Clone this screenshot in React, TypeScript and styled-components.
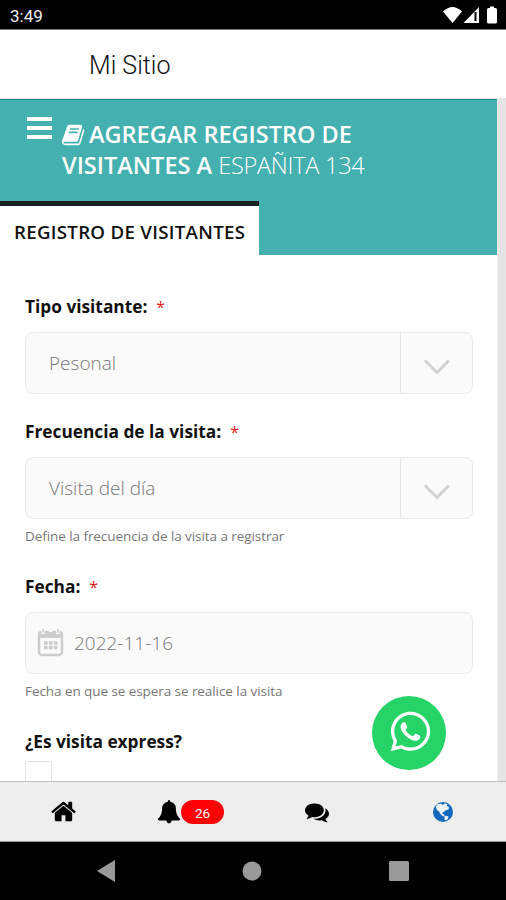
import React from 'react';
import styled, { createGlobalStyle } from 'styled-components';
import { FaWhatsapp } from 'react-icons/fa';

const GlobalStyle = createGlobalStyle`
  * { box-sizing: border-box; }
  body { margin: 0; background: #000; font-family: 'Open Sans', 'Noto Sans', sans-serif; }
`;

const Phone = styled.div`
  position: relative;
  display: flex;
  flex-direction: column;
  width: 506px;
  height: 900px;
  overflow: hidden;
  background: #fff;
`;

const StatusBar = styled.div`
  display: flex;
  justify-content: space-between;
  flex: none;
  height: 30px;
  padding: 0 7px 0 10px;
  background: #000;
  border-bottom: 1px solid #777;
  color: #eee;
  font: 400 17px/32px Roboto, sans-serif;
`;

const TitleBar = styled.header`
  flex: none;
  height: 69px;
  padding-left: 89px;
  border-bottom: 1px solid #e2e2e2;
  color: #111;
  font: 300 25px/72px Roboto, sans-serif;
`;

const Viewport = styled.main`
  display: flex;
  flex: none;
  height: 682px;
  overflow: hidden;
`;

const Page = styled.div`
  width: 497px;
  flex: none;
`;

const Gutter = styled.div`
  flex: 1;
  background: #e4e4e4;
  border-left: 1px solid #eee;
`;

const Banner = styled.section`
  display: flex;
  flex-direction: column;
  justify-content: space-between;
  height: 156px;
  background: #45b0b0;
  border-top: 1px solid #1a9390;
`;

const BannerTop = styled.div`
  display: flex;
  padding: 17px 0 0 27px;
`;

const Burger = styled.div`
  display: flex;
  flex-direction: column;
  gap: 5px;
  width: 25px;
  margin-right: 10px;
`;

const BurgerLine = styled.i`
  height: 4px;
  background: #fff;
`;

const Heading = styled.h1`
  margin: 2px 0 0;
  color: #fff;
  font-size: 23.5px;
  line-height: 31px;
  font-weight: 600;
  white-space: nowrap;
`;

const HeadingLine = styled.div`
  display: flex;
  align-items: center;
  height: 31px;
  white-space: pre;
`;

const BookSlot = styled.span`
  display: flex;
  width: 27px;
  padding-top: 1px;
`;

const LightText = styled.span`
  font-weight: 300;
  letter-spacing: -0.25px;
`;

const Tab = styled.div`
  width: 259px;
  height: 54px;
  padding-left: 14px;
  background: #fff;
  border-top: 5px solid #192020;
  color: #111;
  font-size: 18.7px;
  font-weight: 600;
  line-height: 51px;
  letter-spacing: 0.28px;
  white-space: nowrap;
`;

const Form = styled.form`
  padding: 37px 24px 0 25px;
`;

const Field = styled.div<{ $height: number }>`
  height: ${(p) => p.$height}px;
`;

const Label = styled.label`
  display: block;
  height: 40px;
  color: #111;
  font-size: 17.3px;
  font-weight: 700;
  line-height: 30px;
  white-space: nowrap;
`;

const Star = styled.span`
  margin-left: 9px;
  color: #e02020;
  font-size: 16px;
  font-weight: 500;
`;

const Control = styled.div<{ $inset: number }>`
  display: flex;
  align-items: center;
  height: 62px;
  padding-left: ${(p) => p.$inset}px;
  background: #fafafa;
  border: 1.5px solid #ebebeb;
  border-radius: 8px;
  color: #777;
  font-size: 19px;
  font-weight: 300;
`;

const ArrowCell = styled.div`
  display: flex;
  align-items: center;
  justify-content: center;
  width: 72px;
  height: 100%;
  padding-top: 7px;
  margin-left: auto;
  border-left: 1px solid #e6e6e6;
`;

const ControlText = styled.span`
  padding-bottom: 1px;
`;

const DateText = styled(ControlText)`
  margin-left: 10px;
`;

const Hint = styled.div`
  margin-top: 8px;
  color: #777;
  font-size: 13.5px;
  line-height: 19px;
  letter-spacing: -0.07px;
`;

const Checkbox = styled.div`
  width: 27px;
  height: 27px;
  margin-top: -6px;
  border: 1.5px solid #e4e4e4;
  border-radius: 2px;
`;

const WhatsappButton = styled.button`
  position: absolute;
  left: 372px;
  top: 695.5px;
  display: flex;
  align-items: center;
  justify-content: center;
  width: 74px;
  height: 74px;
  padding: 0 0 3px 3px;
  border: 0;
  border-radius: 50%;
  background: #25d366;
  color: #fff;
`;

const TabBar = styled.nav`
  display: grid;
  grid-template-columns: 127px 127px 126px 126px;
  flex: none;
  height: 61px;
  background: #ededed;
  border-top: 1px solid #bdbdbd;
  border-bottom: 1px solid #999;
`;

const TabItem = styled.div`
  display: flex;
  align-items: center;
  justify-content: center;
`;

const Badge = styled.span`
  width: 43px;
  height: 24px;
  border-radius: 12px;
  background: #fb0304;
  color: #fff;
  font: 400 13.5px/26px Roboto, sans-serif;
  text-align: center;
`;

const SystemBar = styled.footer`
  display: flex;
  align-items: center;
  flex: 1;
  padding-left: 97px;
  background: #000;
`;

const NavShapes = styled.div`
  display: flex;
  align-items: center;
  justify-content: space-between;
  width: 312px;
`;

const FaGlyph = ({ size, d, fill = '#000' }: { size: number; d: string; fill?: string }) => (
  <svg width={size} height={size} viewBox="0 0 1792 1792" fill={fill}>
    <path d={d} />
  </svg>
);

const BOOK =
  'M1639 478q40 57 18 129l-275 906q-19 64-76.5 107.500t-122.500 43.500h-923q-77 0-148.500-53.500t-99.500-131.500q-24-67-2-127 0-4 3-27t4-37q1-8-3-21.500t-3-19.500q2-11 8-21t16.500-23.500 16.500-23.500q23-38 45-91.500t30-91.500q3-10 .5-30t-.5-28q3-11 17-28t17-23q21-36 42-92t25-90q1-9-2.500-32t.5-28q4-13 22-30.500t22-22.500q19-26 42.500-84.500t27.500-96.500q1-8-3-25.500t-2-26.500q2-8 9-18t18-23 17-21q8-12 16.500-30.500t15-35 16-36 19.500-32 26.500-23.500 36-11.500 47.500 5.500l-1 3q38-9 51-9h761q74 0 114 56t18 130l-274 906q-36 119-71.500 153.500t-128.500 34.500h-869q-27 0-38 15-11 16-1 43 24 70 144 70h923q29 0 56-15.500t35-41.500l300-987q7-22 5-57 38 15 59 43zm-1064 2q-4 13 2 22.500t20 9.500h608q13 0 25.500-9.500t16.500-22.500l21-64q4-13-2-22.500t-20-9.500h-608q-13 0-25.500 9.500t-16.500 22.500zm-83 256q-4 13 2 22.500t20 9.500h608q13 0 25.500-9.500t16.500-22.500l21-64q4-13-2-22.500t-20-9.500h-608q-13 0-25.500 9.500t-16.500 22.500z';
const HOME =
  'M1472 992v480q0 26-19 45t-45 19h-384v-384h-256v384h-384q-26 0-45-19t-19-45v-480q0-1 .5-3t.5-3l575-474 575 474q1 2 1 6zm223-69l-62 74q-8 9-21 11h-3q-13 0-21-7l-692-577-692 577q-12 8-24 7-13-2-21-11l-62-74q-8-10-7-23.500t11-21.500l719-599q32-26 76-26t76 26l244 204v-195q0-14 9-23t23-9h192q14 0 23 9t9 23v408l219 182q10 8 11 21.500t-7 23.500z';
const BELL =
  'M1728 1408q0 52-38 90t-90 38h-512q0 90-56 150t-136 60-136-60-56-150h-512q-52 0-90-38t-38-90q50-42 91-88t85-119.500 74.500-158.500 50-206 19.500-260q0-152 117-282.500t307-158.500q-8-19-8-39 0-40 28-68t68-28 68 28 28 68q0 20-8 39 190 28 307 158.500t117 282.500q0 139 19.500 260t50 206 74.500 158.500 85 119.500 91 88z';
const COMMENTS =
  'M1408 768q0 139-94 257t-256.500 186.500-353.500 68.500-176-16q-124 88-278 128-36 9-86 16h-3q-11 0-20.500-8t-11.500-21q-1-3-1-6.500t.5-6.500 2-6l2.500-5 3.500-5.500 4-5 4.500-5 4-4.500q5-6 23-25t26-29.500 22.500-29 25-38.500 20.500-44q-124-72-195-177t-71-224q0-139 94-257t256.500-186.500 353.500-68.500 353.500 68.500 256.500 186.500 94 257zm384 256q0 120-71 224.500t-195 176.500q10 24 20.500 44t25 38.500 22.500 29 26 29.500 23 25q1 1 4 4.500t4.500 5 4 5 3.500 5.500l2.500 5 2 6 .5 6.500-1 6.500q-3 14-13 22t-22 7q-50-7-86-16-154-40-278-128-90 16-176 16-271 0-472-132 58 4 88 4 161 0 309-45t264-129q125-92 192-212t67-254q0-77-23-152 129 71 204 178t75 230z'.replace('68.500-176-16', '68.500q-86 0-176-16');

const StatusIcons = () => (
  <svg width="56" height="29" viewBox="0 0 56 29" fill="#fff">
    <path d="M0 11.500Q9.500 2.500 19 11.500L9.500 23Z" />
    <path d="M36 7v16H20.500Z" />
    <path d="M31.500 12h2v9h-2z" fill="#000" />
    <path d="M44 9.500q0-1.500 1.500-1.500H47V6.500h4V8h1.500Q54 8 54 9.500V22q0 1.500-1.500 1.500h-7Q44 23.500 44 22Z" />
  </svg>
);

const Chevron = () => (
  <svg width="28" height="18" viewBox="0 0 28 18" fill="none" stroke="#d2d2d2" strokeWidth="3">
    <path d="M2 2.500 14 14.500 26 2.500" />
  </svg>
);

const Calendar = () => (
  <svg width="27" height="28" viewBox="0 0 27 28">
    <rect x="2" y="3" width="23" height="23" rx="3" fill="#fafafa" stroke="#cdcdcd" strokeWidth="2.500" />
    <path d="M1 9V5q0-3 3-3h19q3 0 3 3v4Z" fill="#cdcdcd" />
    <path d="M6 0v5M13.500 0v3M21 0v5" stroke="#fafafa" strokeWidth="3.500" />
    <path d="M6 0v4M21 0v4" stroke="#cdcdcd" strokeWidth="1.500" />
    <path d="M7 14h13.500M7 18.500h13.500" stroke="#cdcdcd" strokeWidth="3.300" strokeDasharray="3.700 1.200" />
  </svg>
);

const Globe = () => (
  <svg width="20" height="20" viewBox="0 0 20 20">
    <circle cx="10" cy="10" r="10" fill="#1268bd" />
    <path d="M4 2.500 8 1.500 9.500 3 12 1.200l2.500 1.300-.5 1.500 2 1-.5 2.500-3 1L10.500 10 9 11l2.500 2-1.500 1.500L7.500 12 6 9.500 4 8 2.800 5Z" fill="#eef3f8" />
    <path d="m11.500 13.500 4 1-.5 2.500-2 1.500-1.500-1Z" fill="#eef3f8" />
  </svg>
);

export default function App() {
  return (
    <Phone>
      <GlobalStyle />
      <StatusBar>
        <span>3:49</span>
        <StatusIcons />
      </StatusBar>
      <TitleBar>Mi Sitio</TitleBar>
      <Viewport>
        <Page>
          <Banner>
            <BannerTop>
              <Burger>
                <BurgerLine />
                <BurgerLine />
                <BurgerLine />
              </Burger>
              <Heading>
                <HeadingLine>
                  <BookSlot><FaGlyph size={24} d={BOOK} fill="#fff" /></BookSlot>
                  AGREGAR REGISTRO DE
                </HeadingLine>
                <HeadingLine>
                  {'VISITANTES A '}
                  <LightText>ESPAÑITA 134</LightText>
                </HeadingLine>
              </Heading>
            </BannerTop>
            <Tab>REGISTRO DE VISITANTES</Tab>
          </Banner>
          <Form>
            <Field $height={125}>
              <Label>Tipo visitante:<Star>*</Star></Label>
              <Control $inset={23}>
                <ControlText>Pesonal</ControlText>
                <ArrowCell><Chevron /></ArrowCell>
              </Control>
            </Field>
            <Field $height={155}>
              <Label>Frecuencia de la visita:<Star>*</Star></Label>
              <Control $inset={23}>
                <ControlText>Visita del día</ControlText>
                <ArrowCell><Chevron /></ArrowCell>
              </Control>
              <Hint>Define la frecuencia de la visita a registrar</Hint>
            </Field>
            <Field $height={155}>
              <Label>Fecha:<Star>*</Star></Label>
              <Control $inset={11}>
                <Calendar />
                <DateText>2022-11-16</DateText>
              </Control>
              <Hint>Fecha en que se espera se realice la visita</Hint>
            </Field>
            <Label>¿Es visita express?</Label>
            <Checkbox />
          </Form>
        </Page>
        <Gutter />
      </Viewport>
      <TabBar>
        <TabItem><FaGlyph size={27} d={HOME} /></TabItem>
        <TabItem>
          <FaGlyph size={24} d={BELL} />
          <Badge>26</Badge>
        </TabItem>
        <TabItem><FaGlyph size={24} d={COMMENTS} /></TabItem>
        <TabItem><Globe /></TabItem>
      </TabBar>
      <SystemBar>
        <NavShapes>
          <svg width="18" height="22" viewBox="0 0 18 22"><path d="M18 0v22L0 11Z" fill="#999" /></svg>
          <svg width="20" height="20" viewBox="0 0 20 20"><circle cx="10" cy="10" r="9.500" fill="#999" /></svg>
          <svg width="20" height="20" viewBox="0 0 20 20"><rect width="20" height="20" rx="1.500" fill="#999" /></svg>
        </NavShapes>
      </SystemBar>
      <WhatsappButton aria-label="WhatsApp"><FaWhatsapp size={45} /></WhatsappButton>
    </Phone>
  );
}
